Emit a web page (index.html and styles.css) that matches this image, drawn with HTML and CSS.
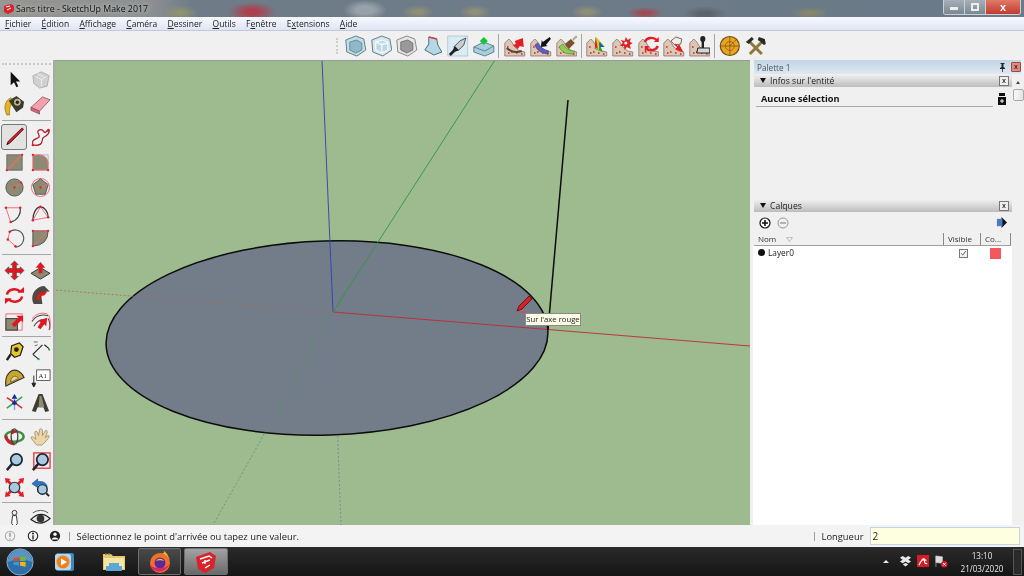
FILE: index.html
```html
<!DOCTYPE html>
<html lang="fr">
<head>
<meta charset="utf-8">
<title>Sans titre - SketchUp Make 2017</title>
<link rel="stylesheet" href="styles.css">
</head>
<body>
<svg class="defs" aria-hidden="true">
  <symbol id="terrain" viewBox="0 0 22 22"><path d="M1 21V8l4-4 3 3 3 5 5 4 5 1v4z" fill="#dcc6b4" stroke="#7a6656" stroke-width=".7"/><g fill="#d8343c"><circle cx="4" cy="12" r=".9"/><circle cx="8" cy="17" r=".9"/><circle cx="13" cy="18" r=".9"/><circle cx="5" cy="18" r=".9"/><circle cx="18" cy="19" r=".9"/></g></symbol>
  <symbol id="cube" viewBox="0 0 22 22"><path d="M11 1l8 3 2 11-9 6-10-4L1 5z" fill="#c3dde8" stroke="#63808c"/><path d="M5 7l7-2 5 3v7l-6 3-6-3z" fill="#8fb9c9" stroke="#6b8d9a"/></symbol>
  <symbol id="mag" viewBox="0 0 22 22"><circle cx="13" cy="9" r="6" fill="#a9c8e2" stroke="#1d2530" stroke-width="1.8"/><path d="M9 13l-6 7" stroke="#1d2530" stroke-width="2.6"/></symbol>
</svg>

<header class="titlebar">
  <svg class="ic-title" viewBox="0 0 12 12"><path d="M1 3l7-2 3 2v5l-6 3-4-2z" fill="#d8232a"/><path d="M3 4l4-1M4 7l4-2" stroke="#fff" stroke-width="1"/></svg>
  <span class="title-text">Sans titre - SketchUp Make 2017</span>
  <div class="winctl">
    <span class="wbtn wmin"><i></i></span>
    <span class="wbtn wmax"><i></i></span>
    <span class="wbtn wclose">x</span>
  </div>
</header>

<nav class="menubar">
  <span><u>F</u>ichier</span><span><u>É</u>dition</span><span><u>A</u>ffichage</span><span><u>C</u>améra</span><span><u>D</u>essiner</span><span><u>O</u>utils</span><span>F<u>e</u>nêtre</span><span>E<u>x</u>tensions</span><span><u>A</u>ide</span>
</nav>

<div class="topbar">
  <div class="grip"></div>
  <svg class="tb" viewBox="0 0 22 22"><use href="#cube"/></svg>
  <svg class="tb" viewBox="0 0 22 22"><path d="M11 1l8 3 2 11-9 6-10-4L1 5z" fill="#d5e7ee" stroke="#63808c"/><path d="M5 7l7-2 5 3v7l-6 3-6-3zM11 10v8M5 7l6 3 6-2" fill="#bcd8e3" stroke="#fff"/></svg>
  <svg class="tb" viewBox="0 0 22 22"><path d="M11 1l8 3 2 11-9 6-10-4L1 5z" fill="#e6e6e6" stroke="#8b8b8b"/><path d="M5 7l7-2 5 3v7l-6 3-6-3z" fill="#9a9a9a" stroke="#777"/></svg>
  <svg class="tb" viewBox="0 0 22 22"><path d="M7 2l8 2 1 6 4 7-8 3-9-5 4-6z" fill="#b5d7e6" stroke="#4f6e7c"/><path d="M7 2l8 2" stroke="#d83a3a" stroke-width="1.4"/></svg>
  <svg class="tb" viewBox="0 0 22 22"><rect x="1" y="1" width="20" height="20" fill="#d7ecf4" stroke="#9fb5bf" stroke-width=".6"/><path d="M19 3l-2 7-6 6-4-4 6-6z" fill="#c8ced2" stroke="#555"/><path d="M8 11l4 4-4 2-4 4-2-2 4-4z" fill="#222"/></svg>
  <svg class="tb" viewBox="0 0 22 22"><path d="M1 12l10-5 10 4v6l-9 4-11-4z" fill="#a9cfdf" stroke="#638391"/><path d="M1 12l11 4 9-5" fill="none" stroke="#638391"/><path d="M11 2l4 4-4 4-4-4z" fill="#16c43c"/></svg>
  <span class="tsep sep1"></span>
  <svg class="tb" viewBox="0 0 22 22"><use href="#terrain"/><path d="M3 13q6 6 15 3" fill="none" stroke="#5a4636" stroke-width="2"/><path d="M9 10l3-1-1-3 8-3 1 9-4-1-2 3z" fill="#e01f26"/></svg>
  <svg class="tb" viewBox="0 0 22 22"><use href="#terrain"/><path d="M5 10q3 8 13 9l1-3q-8-2-11-8z" fill="#5b5fc2" stroke="#343878" stroke-width=".6"/><path d="M20 2l-7 5-1-2-1 7 7-1-2-1 5-6z" fill="#111"/></svg>
  <svg class="tb" viewBox="0 0 22 22"><use href="#terrain"/><path d="M3 12q5 8 14 7l2-3q-8 0-12-7z" fill="#8ccf4e" stroke="#4d7a2a" stroke-width=".6"/><path d="M9 9l6-5 4 4-6 6z" fill="#7a5230"/><path d="M17 5l4-4" stroke="#b9a78e" stroke-width="2"/></svg>
  <span class="tsep sep2"></span>
  <svg class="tb" viewBox="0 0 22 22"><use href="#terrain"/><path d="M10 2l9 10-4 0 2 5-8-3z" fill="#18a83c"/><path d="M10 2l4 4-1 9-3-1z" fill="#e8c81c"/><path d="M10 2l-1 10 3 2z" fill="#d92228"/><path d="M13 7l5 5-4 0z" fill="#2b4fc9"/></svg>
  <svg class="tb" viewBox="0 0 22 22"><use href="#terrain"/><path d="M14 2l2 3 3-2-1 4 3 1-3 2 1 4-4-2-2 3-1-4-4 0 3-3-2-3 4 1z" fill="#e01f26"/><circle cx="14" cy="8" r="1.5" fill="#fff"/></svg>
  <svg class="tb" viewBox="0 0 22 22"><use href="#terrain"/><path d="M7 7a7 6 0 0 1 12-2M20 11a7 6 0 0 1-11 3" fill="none" stroke="#e01f26" stroke-width="2.4"/><path d="M16 7h5V2zM12 11H7v6z" fill="#e01f26"/></svg>
  <svg class="tb" viewBox="0 0 22 22"><use href="#terrain"/><path d="M8 6l5-4 6 2-1 5-6 1z" fill="#eee" stroke="#8a5b50"/><path d="M12 9l6 6M16 10l3 6-6-2" stroke="#e01f26" stroke-width="1.6" fill="#e01f26"/></svg>
  <svg class="tb" viewBox="0 0 22 22"><use href="#terrain"/><path d="M8 18l1-5h12v5z" fill="#d6d6d6" stroke="#222"/><path d="M14 13V6" stroke="#222" stroke-width="2.4"/><ellipse cx="14" cy="4" rx="2.6" ry="3" fill="#222"/></svg>
  <span class="tsep sep3"></span>
  <svg class="tb" viewBox="0 0 22 22"><circle cx="11" cy="11" r="9.500" fill="#eda220" stroke="#6a5213" stroke-width="1.2"/><path d="M11 2v18M2 11h18M11 11l6-6" stroke="#6a5213" stroke-width=".7"/><circle cx="11" cy="11" r="4.5" fill="none" stroke="#6a5213" stroke-width=".6"/></svg>
  <svg class="tb" viewBox="0 0 22 22"><path d="M4 6l13 13" stroke="#8d7a3a" stroke-width="3"/><path d="M18 6L5 19" stroke="#8d7a3a" stroke-width="3"/><path d="M1 7l6-5 2 2-5 5zM14 2l6 2 1 5-2 1-3-3-3-2z" fill="#2c2a24"/></svg>
</div>

<main class="workspace">
  <aside class="tools">
    <div class="grip-h"></div>
    <div class="tgroup">
      <span class="tool"><svg class="ic" viewBox="0 0 22 22"><path d="M7 3v14l3.500-3 2.500 5 2-1-2.500-5h4.500z" fill="#111"/></svg></span>
      <span class="tool"><svg class="ic faded" viewBox="0 0 22 22"><path d="M3 7l9-4 8 4-2 11-8 2-6-5z" fill="#c5c7c7" stroke="#9a9a9a"/><path d="M6 8l6 3 5-3M12 11v7M8 5l6 3" stroke="#eee" fill="none"/></svg></span>
      <span class="tool"><svg class="ic" viewBox="0 0 22 22"><path d="M3 21C-1 13 1 6 7 3l4 4c-4 2-6 7-5 14z" fill="#e8b41c" stroke="#5a4a10" stroke-width=".5"/><path d="M5 6l8-5 8 6-1 6-7 5z" fill="#3b3b2d"/><circle cx="14" cy="7.500" r="3.500" fill="#c4b58a"/><circle cx="14" cy="7.500" r="1.800" fill="#222"/></svg></span>
      <span class="tool"><svg class="ic" viewBox="0 0 22 22"><path d="M1 13L13 2l8 3-11 12z" fill="#f2a0ac" stroke="#8a4a58" stroke-width=".8"/><path d="M1 13l9 4v3l-9-4z" fill="#d3687c" stroke="#8a4a58" stroke-width=".8"/></svg></span>
    </div>
    <div class="tsep-h"></div>
    <div class="tgroup">
      <span class="tool active"><svg class="ic" viewBox="0 0 22 22"><path d="M19 2l1.500 1.500L6 18l-3 1.500L4.500 16z" fill="#d81f26" stroke="#4d0e12" stroke-width=".9"/><path d="M3 19.500l.8-2 1.200 1.200z" fill="#111"/></svg></span>
      <span class="tool"><svg class="ic" viewBox="0 0 22 22"><path d="M3 20c-2-6 3-6 6-8s-4-6 1-8 4 5 7 2 2-3 3-2c1 4-4 7-6 8s0 5-3 7-6 1-8 1z" fill="none" stroke="#a5202b" stroke-width="1.300"/><circle cx="3" cy="20" r="1.300" fill="#e01f26"/><circle cx="19" cy="5" r="1.300" fill="#e01f26"/></svg></span>
      <span class="tool"><svg class="ic" viewBox="0 0 22 22"><rect x="3" y="3" width="16" height="16" fill="#8d8a74" stroke="#666"/><path d="M3 19L19 3" stroke="#f26b74" stroke-width="1.200"/><circle cx="3" cy="19" r="1.200" fill="#e01f26"/><circle cx="19" cy="3" r="1.200" fill="#e01f26"/></svg></span>
      <span class="tool"><svg class="ic" viewBox="0 0 22 22"><path d="M3 3h6q10 1 10 10v6H3z" fill="#8d8a74"/><path d="M19 3v10q0-10-10-10z" fill="none" stroke="#888" stroke-width=".6"/><path d="M3 3v16h16M3 3h6q10 1 10 10v6" fill="none" stroke="#f26b74"/><g fill="#e01f26"><circle cx="3" cy="3" r="1.200"/><circle cx="3" cy="19" r="1.200"/><circle cx="19" cy="19" r="1.200"/></g></svg></span>
      <span class="tool"><svg class="ic" viewBox="0 0 22 22"><circle cx="11" cy="11" r="9" fill="#8d8a74" stroke="#555"/><path d="M11 11l7-5" stroke="#f26b74"/><circle cx="11" cy="11" r="1.200" fill="#e01f26"/><circle cx="18" cy="6" r="1.200" fill="#e01f26"/></svg></span>
      <span class="tool"><svg class="ic" viewBox="0 0 22 22"><circle cx="11" cy="11" r="9.500" fill="none" stroke="#f26b74"/><path d="M11 2l8 6-3 10H6L3 8z" fill="#8d8a74" stroke="#555"/><path d="M11 11l8-3" stroke="#f26b74"/><circle cx="11" cy="11" r="1.200" fill="#e01f26"/></svg></span>
      <span class="tool"><svg class="ic" viewBox="0 0 22 22"><path d="M2 5l15 0M2 5l5 15" stroke="#f26b74" fill="none"/><path d="M7 20C14 18 18 12 17 5" fill="none" stroke="#444" stroke-width="1.200"/><g fill="#e01f26"><circle cx="2" cy="5" r="1.300"/><circle cx="17" cy="5" r="1.300"/><circle cx="7" cy="20" r="1.300"/></g></svg></span>
      <span class="tool"><svg class="ic" viewBox="0 0 22 22"><path d="M3 18c0-8 4-14 8-14 4 0 8 5 8 11" fill="none" stroke="#333" stroke-width="1.300"/><path d="M3 18l8-14 8 11z" fill="none" stroke="#f26b74"/><g fill="#e01f26"><circle cx="3" cy="18" r="1.300"/><circle cx="11" cy="4" r="1.300"/><circle cx="19" cy="15" r="1.300"/></g></svg></span>
      <span class="tool"><svg class="ic" viewBox="0 0 22 22"><path d="M6 4a9 9 0 1 1 6 16" fill="none" stroke="#555" stroke-width="1.200"/><path d="M6 4l-2 8 8 7" fill="none" stroke="#f26b74"/><g fill="#e01f26"><circle cx="6" cy="4" r="1.300"/><circle cx="4" cy="12" r="1.300"/><circle cx="12" cy="19" r="1.300"/></g></svg></span>
      <span class="tool"><svg class="ic" viewBox="0 0 22 22"><path d="M3 3h16q0 15-16 16z" fill="#8d8a74" stroke="#555"/><path d="M3 19L19 3M3 3h16" stroke="#f26b74"/><g fill="#e01f26"><circle cx="3" cy="3" r="1.200"/><circle cx="19" cy="3" r="1.200"/><circle cx="3" cy="19" r="1.200"/></g></svg></span>
    </div>
    <div class="tsep-h"></div>
    <div class="tgroup">
      <span class="tool"><svg class="ic" viewBox="0 0 22 22"><path d="M11 1l4 4-2 0v4h4V7l4 4-4 4v-2h-4v4h2l-4 4-4-4h2v-4H5v2l-4-4 4-4v2h4V5H7z" fill="#e01720" stroke="#333" stroke-width=".5"/></svg></span>
      <span class="tool"><svg class="ic" viewBox="0 0 22 22"><path d="M1 14l10-6 10 6-10 6z" fill="#8d8a74" stroke="#333"/><path d="M11 2l5 6h-3v6H9V8H6z" fill="#e01720"/></svg></span>
      <span class="tool"><svg class="ic" viewBox="0 0 22 22"><path d="M3 10a8 7 0 0 1 14-3M19 12a8 7 0 0 1-14 3" fill="none" stroke="#e01720" stroke-width="2.600"/><path d="M14 8h7V2zM8 14H1v6z" fill="#e01720"/></svg></span>
      <span class="tool"><svg class="ic" viewBox="0 0 22 22"><path d="M4 20C-1 11 6 1 15 1l6 6c-5-1-9 2-9 6l1 7z" fill="#4c4a42"/><path d="M7 16c-1-6 4-10 11-9l-3 4c-3 0-5 1-5 5z" fill="#e01720"/></svg></span>
      <span class="tool"><svg class="ic" viewBox="0 0 22 22"><rect x="2" y="3" width="17" height="17" fill="none" stroke="#f26b74"/><rect x="2" y="8" width="12" height="12" fill="#8d8a74" stroke="#333"/><path d="M8 14l7-7-2-2h7v7l-2-2-7 7z" fill="#e01720"/></svg></span>
      <span class="tool"><svg class="ic" viewBox="0 0 22 22"><path d="M2 11Q8 2 19 5M4 16q4-6 9-7M20 20q2-8-1-12" fill="none" stroke="#444" stroke-width="1.100"/><path d="M2 8Q9 0 18 3q4 2 3 16" fill="none" stroke="#f26b74"/><path d="M8 17l3-5-2-2 9-3-1 9-2-2-4 5z" fill="#e01720"/></svg></span>
    </div>
    <div class="tsep-h s3"></div>
    <div class="tgroup">
      <span class="tool"><svg class="ic" viewBox="0 0 22 22"><path d="M8 5l8-3 4 4-3 9-6 2-4-4z" fill="#e6c72c" stroke="#222" stroke-width="1.300"/><circle cx="13" cy="9" r="2.500" fill="#222"/><path d="M7 14l-4 6" stroke="#222" stroke-width="2.600"/></svg></span>
      <span class="tool"><svg class="ic" viewBox="0 0 22 22"><path d="M3 14l6 5M7 10l6-6M15 4l5 4M3 14l5-5" stroke="#222" stroke-width="1.200" fill="none"/><path d="M4 1h4M5 5l3-1" stroke="#666"/><circle cx="9" cy="19" r="1.200" fill="#2ca64a"/><circle cx="20" cy="9" r="1.200" fill="#2ca64a"/></svg></span>
      <span class="tool"><svg class="ic" viewBox="0 0 22 22"><path d="M2 20L21 11C18 4 12 2 8 4 3 7 1 13 2 20z" fill="#c9a62e" stroke="#333" stroke-width="1.200"/><path d="M7 16l8-4c-1-2-3-3-5-2-2 1-3 3-3 6z" fill="#e2d68c" stroke="#333" stroke-width=".6"/></svg></span>
      <span class="tool"><svg class="ic" viewBox="0 0 22 22"><rect x="7" y="3" width="14" height="11" fill="#fff" stroke="#333" stroke-width=".8"/><text class="a1" x="9" y="11">A1</text><path d="M4 9v11M2 17l2 4 2-4z" stroke="#222" fill="#222"/></svg></span>
      <span class="tool"><svg class="ic" viewBox="0 0 22 22"><path d="M11 11L3 6M11 11l8 6" stroke="#d92a2a" stroke-width="1.600"/><path d="M11 11l8-6M11 11l-8 6" stroke="#29a04a" stroke-width="1.600"/><path d="M11 3v16" stroke="#7fa6d8" stroke-width="1.500"/><path d="M8 7l3-5 3 5zM11 8l3 4-3 2-3-2z" fill="#1b2c9a"/></svg></span>
      <span class="tool"><svg class="ic" viewBox="0 0 22 22"><path d="M2 20L9 2h4l7 18-4 1-2-5H8l-2 5z" fill="#3f3d33"/><path d="M10 4l2 0 3 12-6 0z" fill="#8e8b73"/></svg></span>
    </div>
    <div class="tsep-h s4"></div>
    <div class="tgroup">
      <span class="tool"><svg class="ic" viewBox="0 0 22 22"><ellipse cx="11" cy="11" rx="9.500" ry="5.500" fill="none" stroke="#3b8f3e" stroke-width="2.600"/><path d="M2 10q1 8 9 9" fill="none" stroke="#c9202a" stroke-width="3"/><path d="M8 3l6 3-6 3z" fill="#c9202a"/><ellipse cx="11" cy="11" rx="3.500" ry="8" fill="none" stroke="#444" stroke-width="1.400"/></svg></span>
      <span class="tool"><svg class="ic" viewBox="0 0 22 22"><path d="M7 20c-2-2-5-6-6-8 1-2 3 0 5 2L5 7c0-2 2-2 3 0l1 3 1-6c1-2 2-1 3 0v6l3-5c2-1 2 0 2 2l-2 5 3-2c2 0 1 2 0 3-3 4-5 6-7 7z" fill="#ebd7a6" stroke="#8a7a56" stroke-width=".7"/></svg></span>
      <span class="tool"><svg class="ic" viewBox="0 0 22 22"><use href="#mag"/></svg></span>
      <span class="tool"><svg class="ic" viewBox="0 0 22 22"><rect x="4" y="2" width="17" height="16" fill="none" stroke="#e01f26" stroke-width="1.200"/><use href="#mag"/></svg></span>
      <span class="tool"><svg class="ic" viewBox="0 0 22 22"><circle cx="11" cy="11" r="5.500" fill="#a9c8e2" stroke="#333" stroke-width="1.300"/><path d="M1 1l6 1-1.500 1.500L8 6 6 8 3.500 5.500 2 7zM21 1l-1 6-1.500-1.500L16 8l-2-2 2.500-2.500L15 2zM1 21l1-6 1.500 1.500L6 14l2 2-2.500 2.500L7 20zM21 21l-6-1 1.500-1.500L14 16l2-2 2.500 2.500L20 15z" fill="#e01f26"/></svg></span>
      <span class="tool"><svg class="ic" viewBox="0 0 22 22"><circle cx="13" cy="13" r="5" fill="#a9c8e2" stroke="#1d2530" stroke-width="1.500"/><path d="M17 17l3 3" stroke="#1d2530" stroke-width="2"/><path d="M2 7l6-5v3c5-1 9 1 10 5-3-2-6-3-10-2v3z" fill="#2b78c8" stroke="#123f75" stroke-width=".6"/></svg></span>
    </div>
    <div class="tsep-h"></div>
    <div class="tgroup">
      <span class="tool"><svg class="ic" viewBox="0 0 22 22"><circle cx="11" cy="5" r="2.500" fill="none" stroke="#333"/><path d="M9 8h4l1 8-2 3h-2l-2-3z" fill="#fff" stroke="#333"/><ellipse cx="11" cy="20" rx="3" ry="1.500" fill="#d8343c"/></svg></span>
      <span class="tool"><svg class="ic" viewBox="0 0 22 22"><path d="M1 12Q11 2 21 11q-10 9-20 1z" fill="#e8e8e8" stroke="#222" stroke-width="1.200"/><circle cx="11" cy="11" r="4" fill="#333"/><path d="M3 5q8-5 16 0" fill="none" stroke="#555"/></svg></span>
    </div>
  </aside>

  <section class="canvas">
    <svg class="scene" viewBox="55 60 695 465" preserveAspectRatio="none">
      <ellipse cx="327" cy="338" rx="221" ry="97" transform="rotate(-1.700 327 338)" fill="#737d89" stroke="#0c0c0c" stroke-width="1.500"/>
      <path d="M333 312L322 60" stroke="#2f3fb0" stroke-width=".9"/>
      <path d="M333 312L495 60" stroke="#2a9a3a" stroke-width=".9"/>
      <path d="M333 312L750 346" stroke="#c02a30" stroke-width=".9"/>
      <path d="M333 312L55 290" stroke="#a5685a" stroke-width=".8" stroke-dasharray="2 2"/>
      <path d="M333 312L213 525" stroke="#4f9a55" stroke-width=".8" stroke-dasharray="2 2"/>
      <path d="M333 312L341 525" stroke="#6a80a0" stroke-width=".8" stroke-dasharray="2 2"/>
      <path d="M568 100L548 330" stroke="#0c0c0c" stroke-width="1.500"/>
      <path d="M529 296l3 3-10 10-5 2 2-5z" fill="#d81f26" stroke="#4d0e12" stroke-width=".8"/>
      <path d="M517 312h10" stroke="#e8404a" stroke-width="1"/>
    </svg>
    <div class="tooltip">Sur l'axe rouge</div>
  </section>

  <aside class="panel">
    <div class="palette-head"><span>Palette 1</span><svg class="pin" viewBox="0 0 7 9"><path d="M1.500 0h4v1h-1v3l1.500 1v1H3.900v3h-.8V6H1V5l1.500-1V1h-1z" fill="#222"/></svg><span class="pclose">x</span></div>
    <div class="panel-body">
      <div class="panel-main">
        <div class="sec-head"><span class="tri"></span><span>Infos sur l'entité</span><span class="sec-x">x</span></div>
        <div class="entity">
          <div class="entity-row"><b>Aucune sélection</b><svg class="ent-ic" viewBox="0 0 8 12"><path d="M1 0h6v3H1zM0 4h8v8H0z" fill="#111"/><path d="M4 6v4M2 8h4" stroke="#fff"/></svg></div>
          <div class="rule"></div>
        </div>
        <div class="sec-head"><span class="tri"></span><span>Calques</span><span class="sec-x">x</span></div>
        <div class="layer-tools">
          <svg class="lt" viewBox="0 0 12 12"><circle cx="6" cy="6" r="5" fill="#fff" stroke="#111" stroke-width="1.200"/><path d="M3 6h6M6 3v6" stroke="#111" stroke-width="1.600"/></svg>
          <svg class="lt" viewBox="0 0 12 12"><circle cx="6" cy="6" r="5" fill="none" stroke="#999"/><path d="M3 6h6" stroke="#888" stroke-width="1.200"/></svg>
          <svg class="lt-r" viewBox="0 0 12 12"><path d="M6 0l6 6-6 6z" fill="#111"/><rect x="1" y="2" width="6" height="8" fill="#4c7cc0"/></svg>
        </div>
        <div class="thead">
          <span class="th-name">Nom<svg class="sort" viewBox="0 0 8 6"><path d="M.5.5h7L4 5.500z" fill="none" stroke="#999" stroke-width=".7"/></svg></span>
          <span class="th-vis">Visible</span>
          <span class="th-col">Co...</span>
        </div>
        <div class="tbody">
          <span class="radio"></span><span class="lname">Layer0</span>
          <span class="check"><svg viewBox="0 0 9 9"><path d="M1.500 4.500l2 2 4-5" fill="none" stroke="#333" stroke-width="1"/></svg></span>
          <span class="swatch"></span>
        </div>
      </div>
      <div class="scroll"><span class="sc-up"></span><span class="sc-thumb"></span></div>
    </div>
  </aside>
</main>

<footer class="status">
  <svg class="st-ic dim" viewBox="0 0 14 14"><circle cx="7" cy="7" r="5.500" fill="none" stroke="#aaa" stroke-width="1.300"/><path d="M7 3v5" stroke="#aaa" stroke-width="2.500"/><circle cx="7" cy="10.500" r="1" fill="#aaa"/></svg>
  <svg class="st-ic" viewBox="0 0 14 14"><circle cx="7" cy="7" r="5.500" fill="none" stroke="#222" stroke-width="1.300"/><path d="M7 6v5" stroke="#222" stroke-width="1.600"/><circle cx="7" cy="4" r="1.200" fill="#222"/></svg>
  <svg class="st-ic" viewBox="0 0 14 14"><circle cx="7" cy="7" r="6" fill="#222"/><circle cx="7" cy="5" r="2" fill="#fff"/><path d="M3 11c1-3 7-3 8 0" fill="#fff"/></svg>
  <span class="st-sep"></span>
  <span class="st-text">Sélectionnez le point d'arrivée ou tapez une valeur.</span>
  <span class="st-sep st-sep2"></span>
  <span class="st-label">Longueur</span>
  <span class="st-input">2</span>
</footer>

<div class="taskbar">
  <svg class="orb" viewBox="0 0 30 30"><circle cx="15" cy="15" r="14" fill="#2f6ea8" stroke="#8fb6d4" stroke-width="1"/><path d="M2 15a13 13 0 0 1 26 0q-13-6-26 0z" fill="#7fb2d8" fill-opacity=".55"/><path d="M8 11l6-1v4H8z" fill="#e2492a"/><path d="M15 10l6-1v5h-6z" fill="#76b82a"/><path d="M8 15h6v4l-6-1z" fill="#2f9be0"/><path d="M15 15h6v5l-6-1z" fill="#f2b21c"/></svg>
  <svg class="tk-ic wmp" viewBox="0 0 22 22"><rect x="2" y="2" width="18" height="18" rx="2" fill="#3a88c0"/><rect x="1" y="3" width="16" height="16" rx="2" fill="#bcd6e8"/><circle cx="9" cy="11" r="6.500" fill="#f0801e"/><path d="M7 7.500l6 3.500-6 3.500z" fill="#fff"/></svg>
  <svg class="tk-ic folder" viewBox="0 0 24 22"><path d="M1 3h8l2 2h12v14H1z" fill="#e4c86a"/><path d="M2 7h20v11H2z" fill="#f5e6a8"/><path d="M7 12h10v3h3v5H4v-5h3z" fill="#5ba8d8"/><circle cx="4" cy="3" r="1" fill="#d8343c"/><circle cx="7" cy="3" r="1" fill="#2ca64a"/></svg>
  <span class="tk-btn fx"><svg viewBox="0 0 24 24" class="tk-app"><circle cx="12" cy="13" r="10" fill="#f0702a"/><path d="M12 3c6 1 10 5 10 10 0-5-3-10-6-12 0 3-1 3-4 2z" fill="#f7b52a"/><circle cx="12" cy="13" r="5.500" fill="#5b2a9a"/><path d="M8 11c2-3 6-3 8 0-2-1-6-1-8 0z" fill="#f7c22a"/><path d="M2 15c2 8 16 10 20-2-3 6-14 7-20 2z" fill="#d9246a"/></svg></span>
  <span class="tk-btn su"><svg viewBox="0 0 24 24" class="tk-app"><path d="M2 7l14-5 6 4-2 12-9 5-7-4z" fill="#d8232a"/><path d="M6 9l9-3 3 2M8 13l8-3M11 18l5-3M11 10v4" stroke="#fff" stroke-width="1.400" fill="none"/></svg></span>
  <div class="tray">
    <span class="tray-up"></span>
    <svg class="tr-ic" viewBox="0 0 14 14"><path d="M1 3l3-2 3 2 3-2 3 2-3 2 3 2-3 2-3-2-3 2-3-2 3-2zM4 10l3-1.500L10 10l-3 2.500z" fill="#e8e8e8"/></svg>
    <svg class="tr-ic" viewBox="0 0 14 14"><rect width="13" height="13" fill="#d61a26"/><path d="M2 11Q8 0 8 6q0 4 3 3M5 6q3-2 5 0" fill="none" stroke="#fff" stroke-width="1.300"/></svg>
    <svg class="tr-ic" viewBox="0 0 14 14"><path d="M1 1l7 1v7l-7-1zM1 1v12" fill="#ddd" stroke="#ddd" stroke-width=".6"/><circle cx="10" cy="10" r="3.500" fill="#d61a26"/><path d="M8.500 8.500l3 3M11.500 8.500l-3 3" stroke="#fff"/></svg>
    <div class="clock"><span>13:10</span><span>21/03/2020</span></div>
    <span class="show-desk"></span>
  </div>
</div>
</body>
</html>
```

FILE: styles.css
```css
* { box-sizing: border-box; }
html, body { margin: 0; padding: 0; }
html { background: #f0f0f0; overflow: hidden; }
body {
  width: 1024px; height: 576px; overflow: hidden;
  display: flex; flex-direction: column;
  font-family: "Open Sans", "Noto Sans", sans-serif;
  color: #222; background: #f0f0f0;
  filter: blur(.3px);
}
.defs { position: absolute; width: 0; height: 0; }

.titlebar {
  height: 17px; flex: none; display: flex; align-items: center; padding-left: 3px;
  background:
    radial-gradient(ellipse 24px 10px at 252px 12px, #ad3f4e 25%, transparent),
    radial-gradient(ellipse 18px 8px at 180px 13px, #8f9270 20%, transparent),
    radial-gradient(ellipse 22px 10px at 365px 10px, #98a1a9 40%, transparent),
    radial-gradient(ellipse 16px 7px at 418px 12px, #8f8f78 25%, transparent),
    radial-gradient(ellipse 16px 7px at 475px 12px, #8f8f78 25%, transparent),
    radial-gradient(ellipse 16px 7px at 587px 12px, #8f8f78 25%, transparent),
    radial-gradient(ellipse 18px 6px at 645px 13px, #a04a55 25%, transparent),
    radial-gradient(ellipse 22px 8px at 705px 14px, #5b636a 25%, transparent),
    radial-gradient(ellipse 18px 6px at 810px 13px, #85866a 25%, transparent),
    linear-gradient(90deg, #969692 0, #8d9092 150px, #6f7c88 190px, #6b7a88 100%);
}
.ic-title { width: 12px; height: 12px; margin-right: 1px; }
.title-text { font-size: 8.800px; color: #111; text-shadow: 0 0 4px #ddd; white-space: nowrap; }
.winctl { margin-left: auto; margin-right: 3px; height: 15px; align-self: flex-start; display: flex; border: 1px solid #c9d0d6; border-top: 0; border-radius: 0 0 3px 3px; overflow: hidden; }
.wbtn { display: flex; align-items: center; justify-content: center; height: 100%; background: linear-gradient(#a7b0b8, #7b8791); border-right: 1px solid #c9d0d6; }
.wmin { width: 21px; } .wmax { width: 21px; }
.wmin i { width: 8px; height: 3px; background: #eee; margin-top: 3px; }
.wmax i { width: 8px; height: 8px; border: 2px solid #eee; }
.wclose { width: 34px; border: 0; background: linear-gradient(#e07a66, #c23a30); color: #fff; font: bold 11px/1 "Liberation Sans", sans-serif; }

.menubar {
  height: 14px; flex: none; display: flex; align-items: center; padding-left: 5px;
  background: linear-gradient(#f8f9ff, #dfe5f4); border-bottom: 1px solid #c3c7d6;
  font-size: 8.500px; color: #222;
}
.menubar span { margin-right: 10.300px; white-space: nowrap; }

.topbar { height: 29px; flex: none; display: flex; align-items: center; padding-left: 336px; background: #f0f0f0; }
.grip { width: 7px; height: 16px; border-left: 2px dotted #ccc; }
.tb { width: 25.600px; height: 22px; padding: 0 1.800px; flex: none; }
.tsep { width: 1px; height: 24px; background: #a4a4a4; flex: none; }
.sep1 { margin: 0 3.200px 0 1.600px; }
.sep2 { margin: 0 2.700px 0 1.500px; }
.sep3 { margin: 0 2.200px 0 1.600px; }

.workspace { flex: 1; display: flex; min-height: 0; }

.tools { width: 55px; flex: none; background: #f0f0f0; border-right: 2px solid #a8a8a8; overflow: hidden; }
.grip-h { height: 2px; margin: 3px 2px 2px; border-top: 2px dotted #c8c8c8; }
.tgroup { display: grid; grid-template-columns: 26px 26px; grid-auto-rows: 25.500px; padding-left: 1px; }
.tool { display: flex; align-items: center; justify-content: center; border: 1px solid transparent; border-radius: 2px; }
.tool.active { background: #e2e2e2; border: 1.500px solid #777; border-radius: 3px; }
.ic { width: 21px; height: 21px; flex: none; }
.faded { opacity: .75; }
.a1 { font: 7px "Liberation Serif", serif; fill: #222; }
.tsep-h { height: 1px; margin: 2px 2px 3px; background: #a6a6a6; }
.tsep-h.s3 { margin-bottom: 2px; }
.tsep-h.s4 { margin: 3px 2px 4px; }

.canvas { position: relative; width: 695px; flex: none; background: #9dbb8e; border-top: 1px solid #9a9a9a; overflow: hidden; }
.scene { display: block; width: 695px; height: 465px; margin-top: -1px; }
.tooltip { position: absolute; left: 470px; top: 252px; width: 56px; height: 13px; background: #fbfbe8; border: 1px solid #888; font-size: 7.700px; line-height: 11px; text-align: center; color: #222; white-space: nowrap; }

.panel { flex: 1; display: flex; flex-direction: column; padding-left: 4px; background: #f0f0f0; min-width: 0; }
.palette-head { height: 14px; flex: none; margin-right: 3px; display: flex; align-items: center; padding-left: 3px; background: linear-gradient(#c3d4e4, #dde8f2); font-size: 8.200px; color: #4a5560; }
.pin { width: 7px; height: 9px; margin-left: auto; margin-right: 5px; }
.pclose { width: 10px; height: 10px; background: #dc8a84; border: 1px solid #a04a44; border-radius: 1px; font: bold 7px/7px "Liberation Sans", sans-serif; color: #522; text-align: center; }
.panel-body { flex: 1; display: flex; min-height: 0; }
.panel-main { width: 258px; flex: none; display: flex; flex-direction: column; }
.sec-head { height: 13px; flex: none; display: flex; align-items: center; padding-left: 6px; background: linear-gradient(#f2f2f2, #bcbcbc); font-size: 8.600px; color: #222; }
.tri { width: 0; height: 0; border-left: 3.500px solid transparent; border-right: 3.500px solid transparent; border-top: 5px solid #111; margin-right: 4px; }
.sec-x { margin-left: auto; margin-right: 3px; width: 10px; height: 10px; border: 1px solid #777; background: #eee; font: bold 7px/7px "Liberation Sans", sans-serif; text-align: center; color: #333; }
.entity { height: 112px; flex: none; }
.entity-row { height: 19px; display: flex; align-items: center; justify-content: space-between; padding: 4px 7px 0 7px; font-size: 9.200px; color: #111; }
.ent-ic { width: 8px; height: 12px; margin-right: -1px; }
.rule { height: 1px; margin: 0 19px 0 2px; background: #a9a9a9; }
.layer-tools { height: 21px; flex: none; display: flex; align-items: center; padding: 0 5px; gap: 6px; }
.lt { width: 12px; height: 12px; }
.lt-r { width: 11px; height: 11px; margin-left: auto; }
.thead { height: 13px; flex: none; display: flex; font-size: 8px; color: #333; border-bottom: 1px solid #a0a0a0; background: #f0f0f0; margin-right: 1px; line-height: 12px; }
.th-name { width: 190px; padding-left: 4px; border-right: 1px solid #8a8a8a; }
.sort { width: 7px; height: 5px; margin-left: 10px; }
.th-vis { width: 37px; padding-left: 4px; border-right: 1px solid #8a8a8a; }
.th-col { width: 30px; padding-left: 4px; border-right: 1px solid #8a8a8a; white-space: nowrap; }
.tbody { flex: 1; background: #fff; margin-left: -1px; font-size: 8.300px; display: flex; align-items: flex-start; padding: 2px 0 0 5px; }
.radio { width: 7px; height: 7px; border-radius: 50%; background: #111; margin: 1px 2px 0 0; }
.lname { line-height: 9px; width: 192px; padding-left: 1px; }
.check { width: 9px; height: 9px; border: 1px solid #777; background: #f4f4f4; margin-right: 22px; margin-top: 1px; display: flex; }
.check svg { width: 7px; height: 7px; }
.swatch { width: 11px; height: 11px; background: #f4585e; }
.scroll { flex: 1; display: flex; flex-direction: column; align-items: center; background: #f0f0f0; }
.sc-up { width: 0; height: 0; border-left: 2.500px solid transparent; border-right: 2.500px solid transparent; border-bottom: 3px solid #444; margin-top: 7px; }
.sc-thumb { width: 11px; height: 12px; margin-top: 5px; border: 1px solid #a8a8a8; border-radius: 2px; background: linear-gradient(90deg, #fafafa, #e2e2e2); }

.status { height: 22px; flex: none; display: flex; align-items: center; padding-left: 4px; background: #f3f3f3; font-size: 9.400px; color: #222; }
.st-ic { width: 12px; height: 12px; margin-right: 10.500px; }
.st-ic.dim { opacity: .9; }
.st-sep { width: 1px; height: 9px; background: #a0a0a0; margin: 0 7px 0 -3px; }
.st-text { white-space: nowrap; width: 737px; flex: none; }
.st-sep2 { margin: 0 7px 0 0; }
.st-label { width: 48px; flex: none; }
.st-input { width: 150px; height: 18px; background: #fefee0; border: 1px solid #c3d3e2; padding-left: 2px; line-height: 16px; font-size: 10px; }

.taskbar { height: 29px; flex: none; display: flex; align-items: center; padding-left: 6px; background: linear-gradient(#2a2a2a, #151515); color: #eee; }
.orb { width: 28px; height: 28px; flex: none; }
.tk-ic { width: 22px; height: 22px; flex: none; }
.wmp { margin-left: 20px; }
.folder { margin-left: 26px; width: 24px; }
.tk-btn { width: 43px; height: 27px; flex: none; display: flex; align-items: center; justify-content: center; border: 1px solid #6e6e6e; border-radius: 2px; }
.fx { margin-left: 12px; background: linear-gradient(#4a4a4a, #2c2c2c); }
.su { margin-left: 3px; width: 44px; background: linear-gradient(#a2a2a2, #6a6a6a); }
.tk-app { width: 24px; height: 24px; }
.tray { margin-left: auto; display: flex; align-items: center; height: 100%; }
.tray-up { width: 0; height: 0; border-left: 3px solid transparent; border-right: 3px solid transparent; border-bottom: 3px solid #e8e8e8; margin-right: 10px; }
.tr-ic { width: 13px; height: 13px; margin-right: 5px; }
.clock { width: 52px; margin-left: 3px; display: flex; flex-direction: column; align-items: center; font-size: 8.100px; line-height: 13px; color: #e8e8e8; }
.show-desk { width: 9px; height: 26px; margin: 0 2px 0 5px; border: 1px solid #555; background: #2a2a2a; }
```
